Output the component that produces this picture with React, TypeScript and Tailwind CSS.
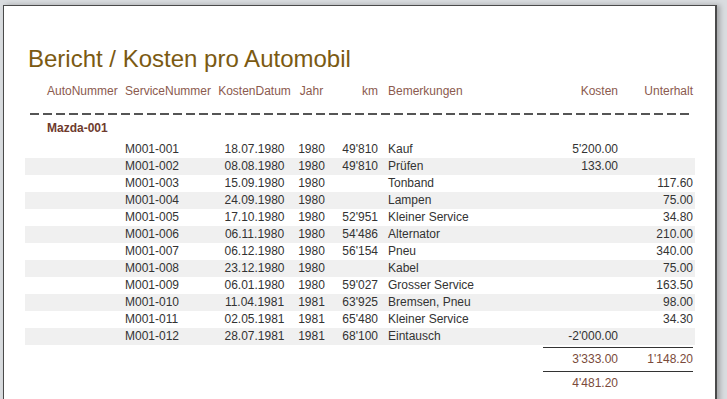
const rows = [
  ["M001-001", "18.07.1980", "1980", "49'810", "Kauf", "5'200.00", ""],
  ["M001-002", "08.08.1980", "1980", "49'810", "Prüfen", "133.00", ""],
  ["M001-003", "15.09.1980", "1980", "", "Tonband", "", "117.60"],
  ["M001-004", "24.09.1980", "1980", "", "Lampen", "", "75.00"],
  ["M001-005", "17.10.1980", "1980", "52'951", "Kleiner Service", "", "34.80"],
  ["M001-006", "06.11.1980", "1980", "54'486", "Alternator", "", "210.00"],
  ["M001-007", "06.12.1980", "1980", "56'154", "Pneu", "", "340.00"],
  ["M001-008", "23.12.1980", "1980", "", "Kabel", "", "75.00"],
  ["M001-009", "06.01.1980", "1980", "59'027", "Grosser Service", "", "163.50"],
  ["M001-010", "11.04.1981", "1981", "63'925", "Bremsen, Pneu", "", "98.00"],
  ["M001-011", "02.05.1981", "1981", "65'480", "Kleiner Service", "", "34.30"],
  ["M001-012", "28.07.1981", "1981", "68'100", "Eintausch", "-2'000.00", ""],
];

function Row({ cells, striped }: { cells: string[]; striped: boolean }) {
  const [svc, date, year, km, note, kosten, unterhalt] = cells;
  return (
    <div className={`flex h-[17px] items-center pr-[2px] text-[12px] leading-[17px] text-[#333] ${striped ? "bg-[#f0f0f0]" : ""}`}>
      <div className="w-[100px]"></div>
      <div className="w-[93px]">{svc}</div>
      <div className="w-[73px] text-center">{date}</div>
      <div className="w-[41px] text-center">{year}</div>
      <div className="w-[46px] text-right">{km}</div>
      <div className="w-[165px] pl-[10px]">{note}</div>
      <div className="w-[75px] text-right">{kosten}</div>
      <div className="w-[75px] text-right">{unterhalt}</div>
    </div>
  );
}

export default function App() {
  return (
    <div className="h-[399px] w-[727px] overflow-hidden bg-[#d9dcdf] font-['Liberation_Sans',Arial,sans-serif]">
      <div className="ml-[3px] mt-[5px] h-[420px] w-[714px] border-l border-t border-r-2 border-[#4a4a4a] bg-white shadow-[3px_0_5px_rgba(0,0,0,0.25)]">
        <h1 className="pl-[24px] pt-[39px] text-[24px] leading-[28px] text-[#7b5a12]">
          Bericht / Kosten pro Automobil
        </h1>

        <div className="ml-[21px] mt-[10px] w-[670px]">
          <div className="flex h-[17px] items-center pr-[2px] text-[12px] leading-[17px] text-[#8b5a4e]">
            <div className="w-[100px] pl-[22px]">AutoNummer</div>
            <div className="w-[93px]">ServiceNummer</div>
            <div className="w-[73px] text-center">KostenDatum</div>
            <div className="w-[41px] text-center">Jahr</div>
            <div className="w-[46px] text-right">km</div>
            <div className="w-[165px] pl-[10px]">Bemerkungen</div>
            <div className="w-[75px] text-right">Kosten</div>
            <div className="w-[75px] text-right">Unterhalt</div>
          </div>

          <div className="ml-[5px] mt-[13px] h-[2px] w-[663px] bg-[repeating-linear-gradient(90deg,#555_0_9px,transparent_9px_13px)]"></div>

          <div className="mt-[5px] h-[17px] pl-[22px] text-[12px] font-bold leading-[17px] text-[#6e3b2e]">
            Mazda-001
          </div>

          <div className="mt-[4px]">
            {rows.map((r, i) => (
              <Row key={r[0]} cells={r} striped={i % 2 === 1} />
            ))}
          </div>

          <div className="flex flex-col items-end pr-[2px] text-[12px] leading-[17px] text-[#7a4a3a]">
            <div className="mt-[2px] h-px w-[150px] bg-[#333]"></div>
            <div className="mt-[3px] flex h-[17px] w-[150px]">
              <div className="w-[75px] text-right">3'333.00</div>
              <div className="w-[75px] text-right">1'148.20</div>
            </div>
            <div className="mt-[3px] h-px w-[150px] bg-[#333]"></div>
            <div className="mt-[3px] flex h-[17px] w-[150px]">
              <div className="w-[75px] text-right">4'481.20</div>
              <div className="w-[75px]"></div>
            </div>
          </div>
        </div>
      </div>
    </div>
  );
}
